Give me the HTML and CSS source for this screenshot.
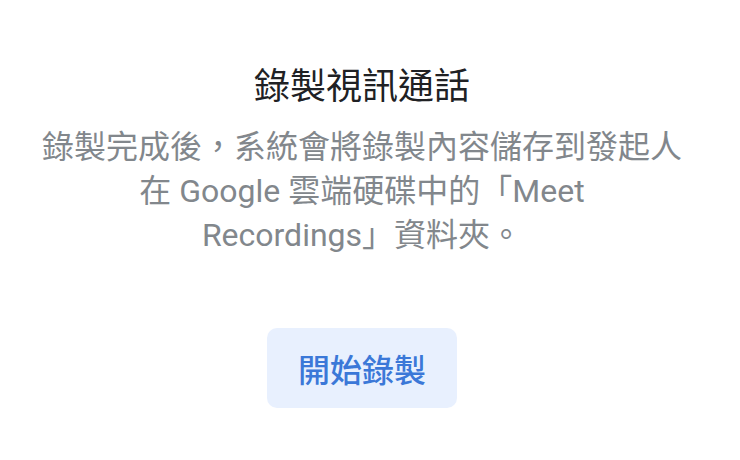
FILE: index.html
```html
<!DOCTYPE html>
<html lang="zh-Hant">
<head>
    <meta charset="UTF-8">
    <meta name="viewport" content="width=device-width, initial-scale=1.0">
    <title>錄製視訊通話</title>
    <link rel="stylesheet" href="styles.css">
</head>
<body>
    <div class="dialog">
        <h1 class="title">錄製視訊通話</h1>
        <p class="desc">錄製完成後，系統會將錄製內容儲存到發起人<br>在 Google 雲端硬碟中的「Meet<br>Recordings」資料夾。</p>
        <button class="start-btn">開始錄製</button>
    </div>
</body>
</html>
```

FILE: styles.css
```css
body {
    margin: 0;
    background: #ffffff;
    font-family: Roboto, "Noto Sans CJK TC", sans-serif;
}

.dialog {
    display: flex;
    flex-direction: column;
    align-items: center;
    padding: 62px 16px 0 0;
}

.title {
    margin: 0;
    font-size: 36px;
    font-weight: 400;
    line-height: 50px;
    color: #202124;
}

.desc {
    margin: 13px 0 0;
    font-size: 32px;
    line-height: 44px;
    color: #82878c;
    text-align: center;
}

.start-btn {
    margin-top: 71px;
    width: 190px;
    height: 80px;
    border: none;
    border-radius: 10px;
    background-color: #e8f0fe;
    color: #3b78d8;
    font-family: Roboto, "Noto Sans CJK TC", sans-serif;
    font-size: 32px;
    font-weight: 500;
    cursor: pointer;
}
```
